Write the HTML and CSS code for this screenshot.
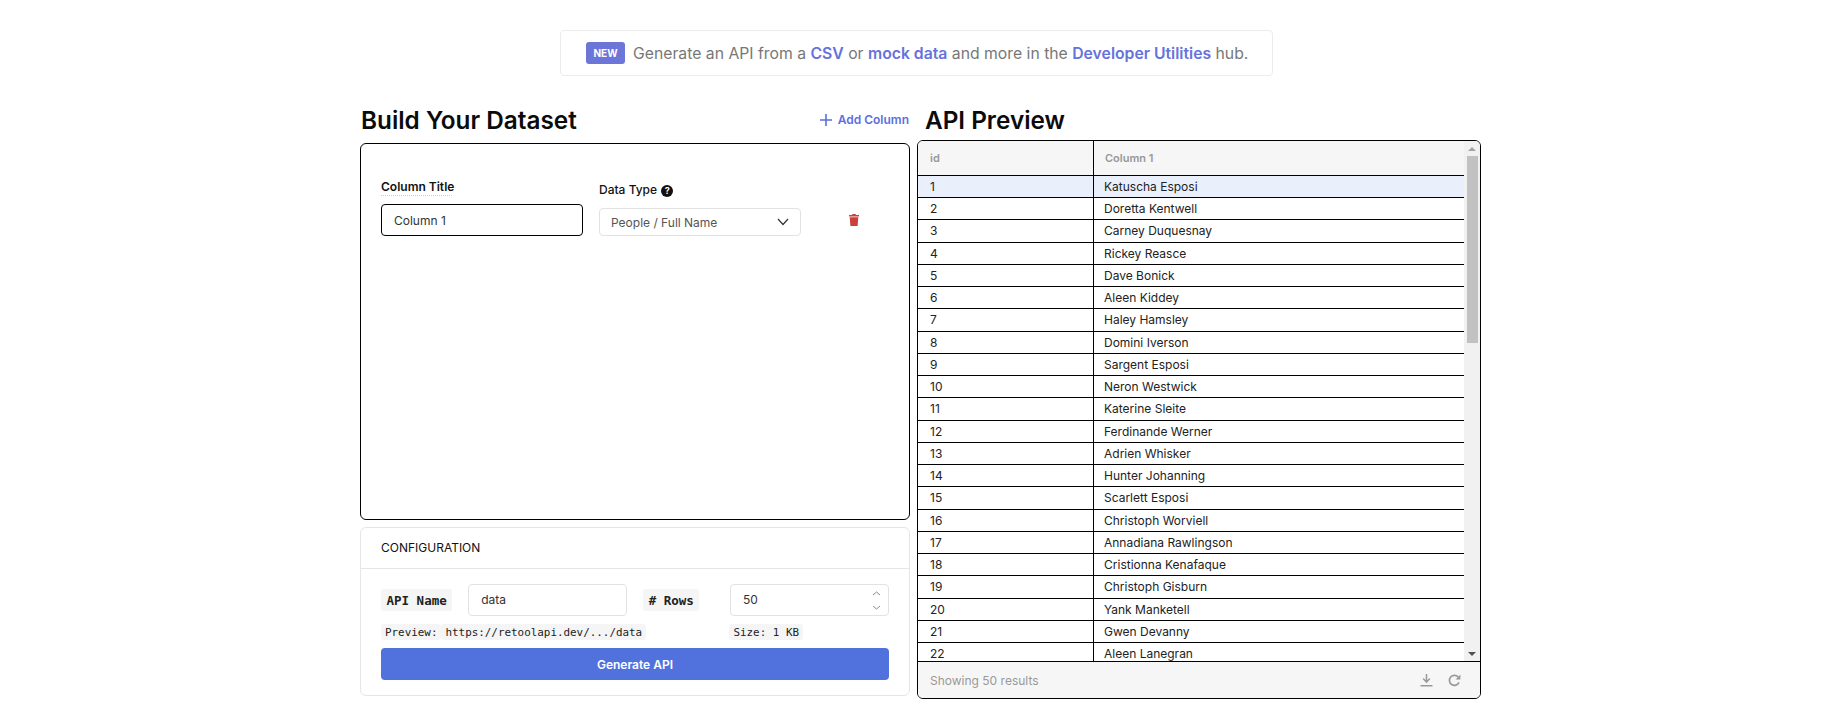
FILE: index.html
```html
<!DOCTYPE html>
<html>
<head>
    <title>Retool API Generator</title>
    <link rel="stylesheet" href="styles.css">
</head>
<body>
    <div class="banner">
        <span class="badge">NEW</span>
        <span>Generate an API from a <a href="#">CSV</a> or <a href="#">mock data</a> and more in the <a href="#">Developer Utilities</a> hub.</span>
    </div>

    <main class="layout">
        <section class="builder">
            <div class="builder-head">
                <h1>Build Your Dataset</h1>
                <a class="add-column" href="#">
                    <svg width="14" height="14" viewBox="0 0 14 14"><path d="M7 1v12M1 7h12" stroke="#5a70de" stroke-width="1.6" fill="none"/></svg>
                    Add Column
                </a>
            </div>

            <div class="columns-card">
                <div class="column-row">
                    <div class="field">
                        <label class="label-dotted">Column Title</label>
                        <div class="text-input focused">Column 1</div>
                    </div>
                    <div class="field">
                        <label class="label-plain">Data Type <span class="help">?</span></label>
                        <div class="select">
                            People / Full Name
                            <svg width="12" height="8" viewBox="0 0 12 8"><path d="M1 1l5 5.5L11 1" stroke="#333" stroke-width="1.2" fill="none"/></svg>
                        </div>
                    </div>
                    <svg class="trash" width="10" height="12" viewBox="0 0 10 12"><path d="M3.5 0h3l.5 1h3v1.4H0V1h3zM.7 3.2h8.6L8.6 12H1.4z" fill="#c9413a"/></svg>
                </div>
            </div>

            <div class="config-card">
                <div class="config-head">CONFIGURATION</div>
                <div class="config-body">
                    <div class="config-row">
                        <span class="tag tag-big">API Name</span>
                        <div class="text-input config-input">data</div>
                        <span class="tag tag-big">&#35; Rows</span>
                        <div class="text-input config-input rows-input">
                            50
                            <svg class="spinner" width="9" height="19" viewBox="0 0 9 19"><path d="M1 4l3.5-3L8 4" stroke="#888" fill="none"/><path d="M1 15l3.5 3L8 15" stroke="#888" fill="none"/></svg>
                        </div>
                    </div>
                    <div class="config-notes">
                        <span class="tag preview-tag">Preview:</span><span class="tag">https://retoolapi.dev/.../data</span>
                        <span class="tag size-tag">Size: 1 KB</span>
                    </div>
                    <button class="generate">Generate API</button>
                </div>
            </div>
        </section>

        <section class="preview">
            <h1 class="preview-title">API Preview</h1>
            <div class="table-card">
                <div class="table-main">
                    <div class="table-data">
                        <div class="row row-head"><div class="cell">id</div><div class="cell">Column 1</div></div>
                        <div class="row row-active"><div class="cell">1</div><div class="cell">Katuscha Esposi</div></div>
                        <div class="row"><div class="cell">2</div><div class="cell">Doretta Kentwell</div></div>
                        <div class="row"><div class="cell">3</div><div class="cell">Carney Duquesnay</div></div>
                        <div class="row"><div class="cell">4</div><div class="cell">Rickey Reasce</div></div>
                        <div class="row"><div class="cell">5</div><div class="cell">Dave Bonick</div></div>
                        <div class="row"><div class="cell">6</div><div class="cell">Aleen Kiddey</div></div>
                        <div class="row"><div class="cell">7</div><div class="cell">Haley Hamsley</div></div>
                        <div class="row"><div class="cell">8</div><div class="cell">Domini Iverson</div></div>
                        <div class="row"><div class="cell">9</div><div class="cell">Sargent Esposi</div></div>
                        <div class="row"><div class="cell">10</div><div class="cell">Neron Westwick</div></div>
                        <div class="row"><div class="cell">11</div><div class="cell">Katerine Sleite</div></div>
                        <div class="row"><div class="cell">12</div><div class="cell">Ferdinande Werner</div></div>
                        <div class="row"><div class="cell">13</div><div class="cell">Adrien Whisker</div></div>
                        <div class="row"><div class="cell">14</div><div class="cell">Hunter Johanning</div></div>
                        <div class="row"><div class="cell">15</div><div class="cell">Scarlett Esposi</div></div>
                        <div class="row"><div class="cell">16</div><div class="cell">Christoph Worviell</div></div>
                        <div class="row"><div class="cell">17</div><div class="cell">Annadiana Rawlingson</div></div>
                        <div class="row"><div class="cell">18</div><div class="cell">Cristionna Kenafaque</div></div>
                        <div class="row"><div class="cell">19</div><div class="cell">Christoph Gisburn</div></div>
                        <div class="row"><div class="cell">20</div><div class="cell">Yank Manketell</div></div>
                        <div class="row"><div class="cell">21</div><div class="cell">Gwen Devanny</div></div>
                        <div class="row"><div class="cell">22</div><div class="cell">Aleen Lanegran</div></div>
                    </div>
                    <div class="scrollbar">
                        <span class="arrow-up"></span>
                        <span class="thumb"></span>
                        <span class="arrow-down"></span>
                    </div>
                </div>
                <div class="table-foot">
                    <span>Showing 50 results</span>
                    <div class="foot-icons">
                        <svg width="13" height="13" viewBox="0 0 13 13"><path d="M6.5 0v7M3.2 4.6l3.3 3.6 3.3-3.6" stroke="#999" stroke-width="1.5" fill="none"/><path d="M.5 11.8h12" stroke="#999" stroke-width="1.5"/></svg>
                        <svg width="13" height="13" viewBox="0 0 13 13"><path d="M11 8.4A5 5 0 1 1 10.2 3" stroke="#999" stroke-width="1.7" fill="none"/><path d="M12.4.6v4.8H7.6z" fill="#999"/></svg>
                    </div>
                </div>
            </div>
        </section>
    </main>
</body>
</html>
```

FILE: styles.css
```css
* {
    box-sizing: border-box;
}

body {
    margin: 0;
    padding-top: 30px;
    background: #fff;
    color: #111;
    font-family: Inter, "Liberation Sans", sans-serif;
    display: flex;
    flex-direction: column;
    align-items: center;
}

a {
    text-decoration: none;
}

h1 {
    margin: 0;
    font-size: 24.3px;
    font-weight: 600;
    color: #0b0b0b;
}

/* top banner */
.banner {
    width: 713px;
    height: 46px;
    margin-bottom: 24px;
    padding-left: 25px;
    display: flex;
    align-items: center;
    gap: 8px;
    border: 1px solid #ececec;
    border-radius: 4px;
    font-size: 15.75px;
    color: #777;
}

.banner a {
    color: #6672dc;
    font-weight: 600;
}

.badge {
    width: 39px;
    height: 22px;
    display: flex;
    align-items: center;
    justify-content: center;
    background: #6b76d8;
    border-radius: 3px;
    color: #fff;
    font-size: 10px;
    font-weight: 700;
}

.layout {
    width: 1121px;
    margin-left: 8px;
    display: flex;
    gap: 7px;
}

/* left side */
.builder {
    width: 550px;
}

.builder-head {
    height: 43px;
    padding: 0 1px 4px;
    display: flex;
    align-items: center;
    justify-content: space-between;
}

.add-column {
    display: flex;
    align-items: center;
    gap: 5px;
    color: #5a70de;
    font-size: 12px;
    font-weight: 600;
}

.columns-card {
    height: 377px;
    padding: 35px 20px 0;
    border: 1px solid #000;
    border-radius: 6px;
}

.column-row {
    display: flex;
    align-items: flex-end;
    gap: 16px;
}

.field {
    width: 202px;
}

.label-dotted,
.label-plain {
    display: block;
    font-size: 12px;
}

.label-dotted {
    width: 71px;
    margin-bottom: 8px;
    padding-bottom: 1px;
    border-bottom: 1px dotted #ccc;
    font-weight: 600;
    white-space: nowrap;
}

.label-plain {
    margin-bottom: 11px;
    font-weight: 500;
}

.help {
    display: inline-block;
    width: 12px;
    height: 12px;
    margin-left: 1px;
    border-radius: 50%;
    background: #111;
    color: #fff;
    font-size: 9px;
    font-weight: 700;
    line-height: 12px;
    text-align: center;
    vertical-align: 0;
}

.text-input {
    height: 32px;
    padding: 0 12px;
    display: flex;
    align-items: center;
    border: 1px solid #e2e2e2;
    border-radius: 4px;
    font-size: 12px;
    color: #333;
}

.text-input.focused {
    border-color: #000;
}

.select {
    height: 28px;
    padding: 0 11px;
    display: flex;
    align-items: center;
    justify-content: space-between;
    border: 1px solid #e2e2e2;
    border-radius: 4px;
    font-size: 12px;
    color: #555;
}

.trash {
    margin-left: 32px;
    margin-bottom: 10px;
}

/* configuration */
.config-card {
    height: 169px;
    margin-top: 7px;
    border: 1px solid #e6e6e6;
    border-radius: 6px;
}

.config-head {
    height: 41px;
    padding: 0 0 1px 20px;
    display: flex;
    align-items: center;
    border-bottom: 1px solid #e6e6e6;
    font-size: 12px;
    font-weight: 400;
}

.config-body {
    padding: 15px 20px 0;
}

.config-row {
    display: flex;
    align-items: center;
    gap: 16px;
}

.config-input {
    width: 159px;
    padding-bottom: 2px;
}

.rows-input {
    position: relative;
    margin-left: auto;
}

.spinner {
    position: absolute;
    right: 7px;
    top: 6px;
}

.tag {
    height: 16px;
    display: inline-flex;
    align-items: center;
    padding: 0 4px;
    background: #f5f5f5;
    border-radius: 3px;
    font-family: "DejaVu Sans Mono", "Liberation Mono", monospace;
    font-size: 10.9px;
    color: #222;
    white-space: pre;
}

.tag-big {
    height: 22px;
    padding: 0 5.5px;
    font-size: 12.5px;
    font-weight: 700;
}

.preview-tag {
    padding-right: 4px;
}

.config-notes {
    margin-top: 8px;
    display: flex;
}

.size-tag {
    margin-left: auto;
    margin-right: 86px;
}

.generate {
    display: block;
    width: 100%;
    height: 32px;
    margin-top: 8px;
    border: none;
    border-radius: 4px;
    background: #5172dc;
    color: #fff;
    font-family: inherit;
    font-size: 12px;
    font-weight: 600;
}

/* right side */
.preview {
    width: 564px;
}

.preview-title {
    height: 40px;
    padding-left: 8px;
    line-height: 40px;
}

.table-card {
    height: 559px;
    display: flex;
    flex-direction: column;
    border: 1px solid #000;
    border-radius: 6px;
    overflow: hidden;
}

.table-main {
    flex: 1;
    min-height: 0;
    display: flex;
    border-bottom: 1px solid #000;
}

.table-data {
    flex: 1;
    overflow: hidden;
}

.row {
    height: 22.25px;
    display: grid;
    grid-template-columns: 176px 1fr;
    border-bottom: 1px solid #000;
    font-size: 12px;
    color: #222;
}

.row-head {
    height: 34.75px;
    background: #f6f6f6;
    color: #999;
    font-size: 11px;
    font-weight: 600;
}

.row-active {
    background: #e9f0fc;
}

.cell {
    padding: 0 12px;
    display: flex;
    align-items: center;
}

.cell:first-child {
    border-right: 1px solid #000;
}

.cell:last-child {
    padding-left: 10px;
}

.row-head .cell:last-child {
    padding-left: 11px;
}

.scrollbar {
    width: 16px;
    display: flex;
    flex-direction: column;
    align-items: center;
    background: #f1f1f1;
}

.arrow-up,
.arrow-down {
    width: 0;
    height: 0;
    border-left: 4px solid transparent;
    border-right: 4px solid transparent;
}

.arrow-up {
    margin-top: 6px;
    border-bottom: 4px solid #a3a3a3;
}

.arrow-down {
    margin-top: auto;
    margin-bottom: 5px;
    border-top: 4px solid #505050;
}

.thumb {
    width: 11px;
    height: 187px;
    margin-top: 5px;
    background: #c1c1c1;
}

.table-foot {
    height: 36px;
    padding: 0 19px 0 12px;
    display: flex;
    align-items: center;
    justify-content: space-between;
    background: #f6f6f6;
    font-size: 12px;
    color: #999;
}

.foot-icons {
    display: flex;
    gap: 15px;
}
```
